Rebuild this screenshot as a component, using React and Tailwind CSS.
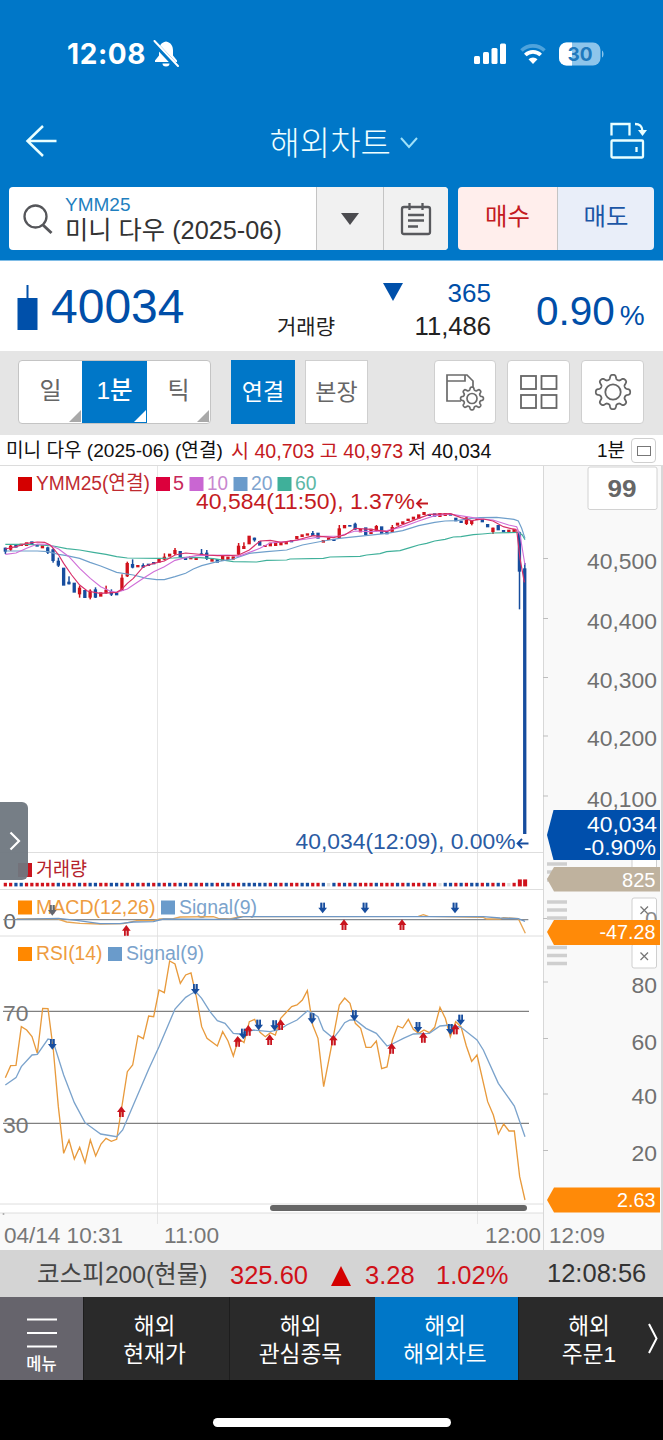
const SANS = "font-['Liberation_Sans','Noto_Sans_CJK_KR',sans-serif]";

// One candle per minute: [color, bodyTop, bodyBottom, wickTop, wickBottom], three units per pixel
const CANDLES = [
  ["b", 338, 350, 338, 357], ["r", 332, 344, 328, 348], ["b", 330, 338], ["r", 326, 333],
  ["r", 322, 333], ["b", 319, 330], ["b", 329, 335], ["r", 331, 340],
  ["b", 337, 353, 335, 357], ["b", 343, 378, 340, 383], ["b", 377, 392, 368, 396], ["b", 398, 452],
  ["b", 440, 448, 424, 448], ["b", 443, 473], ["r", 458, 478, 452, 488], ["b", 465, 489],
  ["r", 467, 488, 463, 493], ["b", 463, 488, 457, 489], ["r", 472, 485], ["r", 464, 475, 452, 476],
  ["b", 468, 479, 463, 483], ["b", 472, 481], ["r", 428, 468, 418, 468], ["r", 384, 424, 380, 426],
  ["b", 387, 398, 373, 400], ["r", 390, 397], ["b", 390, 398, 385, 398], ["b", 386, 393],
  ["b", 381, 388], ["r", 371, 383], ["r", 365, 374, 355, 376], ["r", 356, 365],
  ["r", 345, 357, 339, 360], ["b", 348, 366], ["b", 366, 375], ["r", 363, 373],
  ["r", 367, 375], ["b", 355, 363, 342, 363], ["b", 353, 372, 345, 375], ["r", 372, 380],
  ["b", 372, 383], ["r", 362, 378], ["r", 365, 375], ["r", 364, 374],
  ["r", 332, 359, 324, 360], ["r", 333, 342, 322, 342], ["r", 302, 328], ["b", 308, 316, 308, 320],
  ["b", 318, 332], ["r", 330, 336], ["r", 323, 334], ["r", 322, 333],
  ["r", 323, 331], ["r", 320, 328], ["b", 315, 322], ["r", 303, 313],
  ["r", 298, 306], ["r", 295, 302], ["b", 294, 303, 288, 303], ["b", 293, 311],
  ["r", 315, 323], ["r", 308, 315], ["b", 312, 318], ["r", 280, 309, 270, 312],
  ["r", 270, 280], ["b", 270, 275], ["b", 266, 284, 263, 284], ["r", 282, 292],
  ["b", 277, 300], ["r", 281, 297], ["r", 273, 287, 270, 290], ["b", 274, 297],
  ["b", 290, 298], ["r", 276, 291, 270, 293], ["r", 263, 272], ["r", 259, 267],
  ["r", 251, 258], ["r", 245, 254], ["r", 238, 251], ["r", 231, 240],
  ["b", 237, 243], ["b", 235, 245], ["r", 234, 246], ["r", 234, 243],
  ["b", 236, 242], ["b", 248, 259], ["b", 257, 264], ["r", 247, 267, 244, 270],
  ["r", 255, 267, 255, 271], ["r", 250, 255], ["b", 252, 262], ["b", 267, 277],
  ["r", 278, 291, 278, 297], ["b", 270, 286], ["b", 285, 292], ["r", 284, 292],
  ["r", 281, 293], ["b", 292, 410, 290, 523], ["b", 400, 1197, 384, 1197],
];

const VOLUME =
  "rrbbrrrrrrbrrrbrbbrrbbrbrbrbrbrbrbbrbrbbrbbrrbbbbb" +
  "rbrbrrbbrrb-brbrbrrrbrrrbrbrrbrr-bbrbrbbrbrbr-rRR";

const MA = [
  {
    color: "#3fb09a",
    points: "16,328 80,328 120,330 160,333 200,341 239,345 280,352 318,358 350,365 382,369 477,370 520,369 560,367 600,368 640,371 700,380 770,381 800,376 860,375 870,372 970,370 990,366 1080,364 1100,360 1140,356 1160,350 1200,347 1230,338 1256,330 1280,325 1304,318 1335,313 1360,306 1383,305 1420,299 1447,297 1480,294 1555,292 1567,300 1575,314",
  },
  {
    color: "#6f9fcb",
    points: "16,348 112,348 144,350 176,358 200,362 239,370 270,382 302,393 350,412 400,420 440,430 470,434 493,434 525,425 557,415 580,402 605,392 652,380 700,372 748,355 800,350 860,345 907,330 970,318 1018,310 1097,302 1161,295 1208,287 1256,272 1304,262 1335,258 1370,257 1415,250 1440,248 1490,247 1542,253 1555,258 1565,280 1575,310",
  },
  {
    color: "#d070d8",
    points: "16,358 48,354 80,340 112,327 144,328 176,342 207,365 239,400 271,430 302,455 330,468 350,472 382,462 430,430 461,410 493,395 525,376 557,368 589,362 684,360 716,364 748,352 780,340 810,324 860,320 920,312 970,304 1018,303 1066,288 1113,290 1161,287 1210,275 1256,258 1304,242 1351,237 1399,245 1447,252 1479,255 1526,270 1550,275 1560,300 1575,390",
  },
  {
    color: "#d8306a",
    points: "16,342 48,335 80,325 112,321 134,322 150,330 160,340 176,360 191,385 215,420 239,450 262,468 300,475 350,472 366,462 382,445 400,430 430,395 461,385 493,378 525,360 557,354 589,357 621,360 652,362 684,362 716,360 748,345 780,318 811,316 843,322 891,315 940,302 1000,308 1034,300 1066,280 1113,283 1161,290 1210,268 1256,250 1288,238 1351,236 1383,248 1415,257 1450,252 1479,258 1510,275 1550,285 1560,370 1573,442",
  },
];

const RSI =
  "16,413 32,377 48,376 64,260 80,270 96,290 112,340 128,205 144,206 160,330 175,500 191,640 207,600 223,657 239,622 255,668 271,600 287,648 303,612 318,595 334,604 350,598 364,510 382,395 398,375 414,287 430,296 446,228 461,230 477,150 493,158 509,63 525,72 541,130 557,105 573,99 589,170 605,260 621,295 652,318 668,275 684,303 700,348 716,295 732,308 748,245 764,238 780,277 796,290 811,278 826,285 842,235 875,200 891,195 907,180 922,152 938,255 954,295 971,440 1000,290 1018,195 1034,174 1050,190 1066,250 1082,265 1098,322 1113,322 1129,303 1145,386 1161,381 1177,300 1193,258 1208,264 1225,238 1240,268 1256,280 1272,270 1288,278 1304,262 1320,202 1336,235 1351,290 1367,245 1383,260 1399,318 1415,364 1431,345 1463,485 1480,525 1495,582 1511,552 1527,573 1543,573 1559,710 1575,780";
const RSI_SIGNAL =
  "16,435 48,413 64,380 96,345 112,343 144,297 158,300 191,405 223,488 255,548 302,582 350,590 368,570 400,495 446,388 477,320 525,207 557,172 573,162 587,155 605,175 630,215 652,242 675,250 700,280 720,282 760,270 810,275 840,268 860,255 891,240 922,213 938,220 954,230 970,270 1000,295 1018,272 1034,248 1050,240 1066,240 1098,265 1129,280 1161,318 1177,312 1210,295 1240,282 1288,280 1320,258 1351,255 1383,262 1431,300 1450,330 1495,430 1543,498 1575,590";

const RSI_ARROWS = [
  ["down", 157, 313], ["down", 586, 148], ["down", 730, 282], ["down", 776, 255], ["down", 824, 257],
  ["down", 936, 236], ["down", 1063, 227], ["down", 1254, 262], ["down", 1351, 268], ["down", 1382, 240],
  ["up", 364, 515], ["up", 713, 304], ["up", 745, 271], ["up", 809, 299], ["up", 842, 254],
  ["up", 1000, 300], ["up", 1175, 325], ["up", 1270, 292], ["up", 1366, 267],
];

const MACD_ARROWS = [
  ["down", 968, 354], ["down", 1095, 354], ["down", 1365, 354],
  ["up", 379, 421], ["up", 1032, 404], ["up", 1206, 404],
];

const TABS = [
  { top: "해외", bottom: "현재가", width: "w-[146px]" },
  { top: "해외", bottom: "관심종목", width: "w-[146px]" },
  { top: "해외", bottom: "해외차트", width: "w-[143px]", active: true },
  { top: "해외", bottom: "주문1", width: "w-[145px]" },
];

const toneOf = (c) => (c.toLowerCase() === "r" ? "#d0121c" : "#174d9e");
const candleX = (i) => 16 + i * 15.9;

function gearPath(cx, cy, r, depth) {
  const pts = [];
  for (let i = 0; i < 160; i++) {
    const t = (i / 160) * Math.PI * 2;
    const rad = r + depth * Math.tanh(1.8 * Math.cos(8 * t));
    pts.push(`${(cx + rad * Math.sin(t)).toFixed(2)},${(cy - rad * Math.cos(t)).toFixed(2)}`);
  }
  return `M${pts.join("L")}Z`;
}

function Arrow({ dir, x, y, color }) {
  const fill = color || (dir === "up" ? "#c8141e" : "#174d9e");
  return (
    <g transform={`translate(${x},${y}) ${dir === "up" ? "scale(1,-1)" : ""}`} fill={fill}>
      <path d="M-13,-1H13L0,16Z" />
      <path d="M-7,-16h14v20h-14z" opacity="0.45" />
      <path d="M-7,-16h5v20h-5zM2,-16h5v20h-5z" />
    </g>
  );
}

function Label({ x, y, w, size = 20, fill, anchor, children }) {
  return (
    <text
      x={x}
      y={y}
      fontSize={size}
      fill={fill}
      textAnchor={anchor}
      textLength={w}
      lengthAdjust="spacingAndGlyphs"
    >
      {children}
    </text>
  );
}

function StatusBar() {
  return (
    <div className="flex h-[108px] items-center justify-between pl-[67px] pr-[59px] text-white">
      <div className="flex items-center gap-[5px]">
        <span className="w-[81px] whitespace-nowrap font-['Inter',sans-serif] text-[28px] font-bold leading-none tracking-[0.6px]">12:08</span>
        <svg width="26" height="28" viewBox="0 0 26 28">
          <path d="M13 1.5c-5 1-7 4.500-7 9v5L2 20.500v1.500h22v-1.500l-4-5v-5c0-4.500-2-8-7-9z" fill="#fff" />
          <path d="M9.500 23.500h7a3.500 3 0 0 1-7 0z" fill="#fff" />
          <path d="M0 1.500L23 26" stroke="#0077c8" strokeWidth="5" />
          <path d="M1.500 1L25 26" stroke="#fff" strokeWidth="2" strokeLinecap="round" />
        </svg>
      </div>
      <div className="flex items-center">
        <svg width="34" height="22" viewBox="0 0 34 22" fill="#fff">
          <rect x="1" y="13" width="6" height="8" rx="1.500" />
          <rect x="10" y="9" width="6" height="12" rx="1.500" />
          <rect x="18.500" y="5" width="6" height="16" rx="1.500" />
          <rect x="27" y="0.500" width="6" height="20.500" rx="1.500" />
        </svg>
        <svg className="ml-[13px]" width="26" height="22" viewBox="0 0 26 22" fill="none">
          <path d="M1.500 7.500a16.500 16.500 0 0 1 23 0" stroke="#4ea3dc" strokeWidth="3.600" />
          <path d="M5.300 12a11 11 0 0 1 15.400 0" stroke="#fff" strokeWidth="3.700" />
          <path d="M13 21l-4.500-4.700a6.400 6.400 0 0 1 9 0z" fill="#fff" />
        </svg>
        <svg className="ml-[13px]" width="45" height="24" viewBox="0 0 45 24">
          <defs>
            <clipPath id="cell">
              <rect x="0" y="0.500" width="41.500" height="23" rx="7.500" />
            </clipPath>
          </defs>
          <g clipPath="url(#cell)">
            <rect width="42" height="24" fill="#8dc5eb" />
            <rect width="13" height="24" fill="#fff" />
          </g>
          <path d="M43 8.500c2 1 2 6 0 7z" fill="#8dc5eb" />
          <text x="21" y="19" textAnchor="middle" fontSize="19" fontWeight="700" fontFamily="Inter, sans-serif" fill="#1f79bd">30</text>
        </svg>
      </div>
    </div>
  );
}

function TitleBar() {
  return (
    <div className="flex h-[79px] items-center justify-between pb-[13px] pl-[25px] pr-[15px]">
      <svg width="33" height="40" viewBox="0 0 33 40" fill="none" stroke="#e9ffff" strokeWidth="2.500">
        <path d="M18 5L2.500 20L18 35M2.500 20H31.500" />
      </svg>
      <div className="flex items-center pl-[22px] pt-[4px] text-[#f0ffff]">
        <span className="w-[129px] whitespace-nowrap text-[33px] font-light leading-none">해외차트</span>
        <svg width="20" height="14" viewBox="0 0 20 14" fill="none" stroke="#9fe0f8" strokeWidth="2">
          <path d="M2 2L10 11L18 2" />
        </svg>
      </div>
      <svg width="40" height="40" viewBox="0 0 40 40" fill="none" stroke="#e9ffff" strokeWidth="2.300">
        <path d="M3.500 14.500V3H21.500v11.500" />
        <rect x="3.500" y="19.500" width="31.500" height="17" rx="1" />
        <path d="M28.500 26v5M27 3c5 0 7 2 7.500 7" />
        <path d="M30 9h9l-4.500 6z" fill="#e9ffff" stroke="none" />
      </svg>
    </div>
  );
}

function SearchRow() {
  return (
    <div className="flex h-[63px] gap-[10px] pl-[9px] pr-[9px]">
      <div className="flex w-[439px] overflow-hidden rounded-sm bg-white">
        <div className="flex w-[307px] items-center">
          <svg className="ml-[14px]" width="30" height="32" viewBox="0 0 30 32" fill="none" stroke="#55565a" strokeWidth="2.300">
            <circle cx="12.500" cy="13.500" r="11" />
            <path d="M20 22l8.500 8" strokeWidth="3" />
          </svg>
          <div className="ml-[12px] whitespace-nowrap">
            <div className="text-[19px] leading-[22px] text-[#1f7fbf]">YMM25</div>
            <div className="text-[25.300px] leading-[28px] text-[#333]">미니 다우 (2025-06)</div>
          </div>
        </div>
        <div className="flex w-[67px] items-center justify-center border-l border-[#c4c4c4] bg-[#f1f1f1]">
          <svg width="18" height="12" viewBox="0 0 18 12">
            <path d="M0 0h18L9 12z" fill="#4b4b4f" />
          </svg>
        </div>
        <div className="flex flex-1 items-center justify-center border-l border-[#c4c4c4] bg-[#f1f1f1]">
          <svg width="32" height="34" viewBox="0 0 32 34" fill="none" stroke="#58595d" strokeWidth="2.300">
            <rect x="2" y="5" width="28" height="27" rx="2" />
            <path d="M9.500 1v7M22.500 1v7M8 13h16M8 18.500h16M8 24.500h10" />
          </svg>
        </div>
      </div>
      <div className="flex flex-1 overflow-hidden rounded-sm text-[24.400px] leading-none">
        <button className="w-[99px] bg-[#ffeeec] pb-[2px] text-[#c41a22]">매수</button>
        <button className="flex-1 border-l border-[#c4c4c4] bg-[#e9eef9] pb-[2px] text-[#1c56a6]">매도</button>
      </div>
    </div>
  );
}

function Quote() {
  return (
    <div className="flex h-[91px] border-t border-[#7fbce6] bg-white leading-none text-[#004ea8]">
      <svg className="ml-[17px] mt-[24px]" width="21" height="45" viewBox="0 0 21 45">
        <path d="M0.500 13h20v32h-20zM9.500 0h2v14h-2z" fill="#0050aa" />
      </svg>
      <div className="ml-[13px] mt-[22px] w-[213px] text-[48px]">40034</div>
      <div className="mt-[55px] w-[119px] whitespace-nowrap pl-[13px] text-[21px] text-[#222]">거래량</div>
      <div className="relative mt-[19px] w-[108px] text-right text-[26px]">
        <svg className="absolute left-0 top-[3px]" width="20" height="18" viewBox="0 0 20 18">
          <path d="M0 0h20L10 18z" fill="#0050aa" />
        </svg>
        <div>365</div>
        <div className="mt-[8px] text-[25.600px] text-[#222]">11,486</div>
      </div>
      <div className="ml-[45px] mt-[30px] flex items-baseline text-[40.500px]">
        0.90<span className="ml-[5px] text-[28px]">%</span>
      </div>
    </div>
  );
}

function Corner({ fill }) {
  return (
    <svg className="absolute bottom-[1px] right-[1px]" width="12" height="12" viewBox="0 0 12 12">
      <path d="M12 0v12H0z" fill={fill} />
    </svg>
  );
}

function Toolbar() {
  const box = "flex h-[64px] items-center justify-center border border-[#cfcfcf] bg-white";
  return (
    <div className="flex h-[84px] items-start bg-[#e5e5e5] pl-[18px] pt-[9px] text-[23px] leading-none text-[#666]">
      <div className="flex h-[64px] rounded-sm border border-[#c4c4c4] bg-white">
        <div className="relative flex w-[63px] items-center justify-center pb-[2px] text-[24px]">일<Corner fill="#a9a9a9" /></div>
        <div className="relative flex w-[65px] items-center justify-center bg-[#0077c8] pb-[2px] text-[24.500px] font-medium text-white">1분<Corner fill="#fff" /></div>
        <div className="relative flex w-[63px] items-center justify-center pb-[2px] text-[24px]">틱<Corner fill="#a9a9a9" /></div>
      </div>
      <div className="ml-[20px] flex h-[64px] w-[64px] items-center justify-center bg-[#0077c8] text-white">연결</div>
      <div className={`${box} ml-[10px] w-[63px]`}>본장</div>
      <div className={`${box} ml-[66px] w-[62px] rounded-sm`}>
        <svg width="40" height="38" viewBox="0 0 40 38" fill="none" stroke="#6b6b6b" strokeWidth="1.700">
          <path d="M16 28H2V2h20l6 6v6" />
          <path d="M2 8h18V2" />
          <path d={gearPath(27, 25.500, 10, 1.500)} fill="#fff" />
          <circle cx="27" cy="25.500" r="5" />
        </svg>
      </div>
      <div className={`${box} ml-[11px] w-[63px] rounded-sm`}>
        <svg width="40" height="36" viewBox="0 0 40 36" fill="none" stroke="#666" strokeWidth="1.800">
          <rect x="2" y="2" width="15" height="13" />
          <rect x="22.500" y="2" width="15" height="13" />
          <rect x="2" y="21" width="15" height="13" />
          <rect x="22.500" y="21" width="15" height="13" />
        </svg>
      </div>
      <div className={`${box} ml-[11px] w-[63px] rounded-sm`}>
        <svg width="38" height="38" viewBox="0 0 38 38" fill="none" stroke="#666" strokeWidth="1.800" strokeLinejoin="round">
          <path d={gearPath(19, 19, 15, 2.300)} />
          <circle cx="19" cy="19" r="7.700" />
        </svg>
      </div>
    </div>
  );
}

function InfoRow() {
  return (
    <div className="flex h-[31px] shrink-0 items-center whitespace-nowrap border-b border-[#dcdcdc] bg-white pl-[6px] pr-[7px] pt-[3px] text-[19.600px] text-[#111]">
      <span className="w-[225px] text-[19.100px]">미니 다우 (2025-06) (연결)</span>
      <span className="w-[177px] text-[#c41a22]">시 40,703 고 40,973</span>
      <span>저 40,034</span>
      <span className="ml-auto text-[19px]">1분</span>
      <div className="mb-[2px] ml-[6px] flex h-[25px] w-[25px] items-center justify-center rounded-sm border border-[#cfcfcf]">
        <div className="h-[10px] w-[14px] border border-[#777]" />
      </div>
    </div>
  );
}

function Plot() {
  return (
    <svg width="543" height="784" viewBox="0 466 543 784" className="block">
      <rect x="0" y="466" width="543" height="748" fill="#fff" />
      <rect x="0" y="1213" width="543" height="37" fill="#f9f9f9" />
      <path d="M157.500 466V1224M477.500 466V1224" stroke="#e6e6e6" />
      <path d="M0 852.500H543M0 889.500H543M0 936H543M0 1204H543M0 1213H543" stroke="#dedede" />

      {/* legends */}
      <rect x="18" y="477" width="14" height="14" fill="#d40000" />
      <Label x={36} y={490} w={114} fill="#bf2a30">YMM25(연결)</Label>
      <rect x="156" y="477" width="14" height="14" fill="#dc003c" />
      <Label x={173} y={490} w={11} fill="#c8285a">5</Label>
      <rect x="189.500" y="477" width="14" height="14" fill="#c966d2" />
      <Label x={207} y={490} w={21} fill="#c987cf">10</Label>
      <rect x="233.500" y="477" width="14" height="14" fill="#6a9bcb" />
      <Label x={251} y={490} w={21.5} fill="#7fa5cf">20</Label>
      <rect x="277.500" y="477" width="14" height="14" fill="#3fb09a" />
      <Label x={295} y={490} w={21.5} fill="#5cb8a6">60</Label>

      {/* price */}
      <g transform="translate(0,435) scale(0.333333)">
        {CANDLES.map(([c, top, bottom, hi, lo], i) => (
          <g key={i} fill={toneOf(c)}>
            <rect x={candleX(i) - 5} y={top} width="10" height={bottom - top} />
            {hi !== undefined && <rect x={candleX(i) - 2} y={hi} width="4.500" height={lo - hi} />}
          </g>
        ))}
        {MA.map((m) => (
          <polyline key={m.color} points={m.points} fill="none" stroke={m.color} strokeWidth="3.500" />
        ))}
      </g>
      <Label x={196} y={509} w={219} size={22.5} fill="#c41a22">40,584(11:50), 1.37%</Label>
      <path d="M428 503.500H417.500M421.500 499L417 503.500L421.500 508" stroke="#c41a22" strokeWidth="1.800" fill="none" />
      <Label x={295.500} y={849} w={220} size={22.5} fill="#2a5ba3">40,034(12:09), 0.00%</Label>
      <path d="M528.500 843.500H518M522 839L517.500 843.500L522 848" stroke="#174d9e" strokeWidth="1.800" fill="none" />

      {/* volume */}
      <rect x="18" y="863" width="14" height="14" fill="#c8141e" />
      <Label x={36} y={876} w={51} size={19.5} fill="#b5222b">거래량</Label>
      {VOLUME.split("").map((c, i) => {
        const x = candleX(i) / 3;
        if (c === "-") return <rect key={i} x={x - 1.6} y={883} width={3.2} height={3.4} fill="#dcdcdc" />;
        const h = c === "R" ? 7 : 3.6;
        return <rect key={i} x={x - 1.6} y={886.400 - h} width={c === "R" ? 4 : 3.2} height={h} fill={toneOf(c)} />;
      })}

      {/* macd */}
      <rect x="18" y="900.500" width="14" height="14" fill="#ff8800" />
      <Label x={36} y={914} w={119.500} fill="#ee9c40">MACD(12,26)</Label>
      <rect x="161" y="900.500" width="14" height="14" fill="#6a9bcb" />
      <Label x={179} y={914} w={78} fill="#7ba3cc">Signal(9)</Label>
      <Label x={3.500} y={929} w={12.500} size={22} fill="#666">0</Label>
      <g transform="translate(0,790) scale(0.333333)" fill="none" strokeWidth="4">
        <path d="M10,389H1585" stroke="#858a90" />
        <polyline stroke="#e8a552" points="50,387 170,386 200,396 240,400 300,402 370,401 410,392 460,392 480,387 520,386 540,381 640,380 655,385 690,387 720,380 1255,379 1270,374 1285,379 1450,382 1460,387 1500,387 1510,383 1555,386 1576,430" />
        <polyline stroke="#6f97c4" points="50,388 175,385 230,391 300,401 360,401 400,396 460,395 490,387 640,388 700,387 730,380 1450,380 1500,384 1555,386 1575,394" />
        <Arrow dir="down" x={157} y={361} color="#62666e" />
        {MACD_ARROWS.map(([dir, x, y]) => (
          <Arrow key={x} dir={dir} x={x} y={y} />
        ))}
      </g>

      {/* rsi */}
      <rect x="18" y="947" width="14" height="14" fill="#ff8800" />
      <Label x={36} y={960} w={66.500} fill="#ee9c40">RSI(14)</Label>
      <rect x="108" y="947" width="14" height="14" fill="#6a9bcb" />
      <Label x={126} y={960} w={78} fill="#7ba3cc">Signal(9)</Label>
      <path d="M3 1011.400H529M3 1123.400H529" stroke="#808080" strokeWidth="1.400" />
      <Label x={3} y={1021} w={25.500} size={22.5} fill="#777">70</Label>
      <Label x={3} y={1133} w={25.500} size={22.5} fill="#777">30</Label>
      <g transform="translate(0,940) scale(0.333333)">
        <polyline points={RSI} fill="none" stroke="#e89a3c" strokeWidth="4" />
        <polyline points={RSI_SIGNAL} fill="none" stroke="#7ba3cc" strokeWidth="4" />
        {RSI_ARROWS.map(([dir, x, y]) => (
          <Arrow key={x} dir={dir} x={x} y={y} />
        ))}
      </g>

      {/* scroll thumb and time axis */}
      <rect x="270" y="1205" width="257" height="6" rx="3" fill="#666" />
      <circle cx="3.500" cy="1214" r="1" fill="#aaa" />
      <Label x={4} y={1243} w={119} size={22.5} fill="#777">04/14 10:31</Label>
      <Label x={164} y={1243} w={55} size={22.5} fill="#777">11:00</Label>
      <Label x={485} y={1243} w={56} size={22.5} fill="#777">12:00</Label>
    </svg>
  );
}

function Grip({ y }) {
  return <path d={`M547 ${y}h20M547 ${y + 8}h20M547 ${y + 16}h20`} stroke="#cfcfcf" strokeWidth="3.500" />;
}

function Close({ y }) {
  return (
    <g fill="none">
      <rect x="632" y={y} width="24.500" height="24" rx="2" fill="#fff" stroke="#cfcfcf" />
      <path d={`M640.500 ${y + 8.500}l7.500 7.500m0 -7.500l-7.500 7.500`} stroke="#777" strokeWidth="1.300" />
    </g>
  );
}

function Axis() {
  const prices = [["40,500", 569], ["40,400", 629], ["40,300", 687.500], ["40,200", 746], ["40,100", 806.500]];
  const levels = [["80", 993], ["60", 1050], ["40", 1104], ["20", 1161]];
  return (
    <svg width="120" height="784" viewBox="543 466 120 784" className="block">
      <rect x="543" y="466" width="120" height="784" fill="#f9f9f9" />
      <path d="M543 466V1250M662 466V1250" stroke="#d8d8d8" strokeWidth="2" />
      <path d="M543 558.500h5M543 618.500h5M543 677.500h5M543 736h5M543 796h5M543 918.500h5M543 982h5M543 1038.500h5M543 1094h5M543 1150.500h5" stroke="#bdbdbd" />
      <rect x="588" y="467" width="69" height="42.500" rx="2" fill="#fff" stroke="#d2d2d2" />
      <Label x={607.500} y={496.500} w={29} size={23} fill="#666">
        <tspan fontWeight="700">99</tspan>
      </Label>
      {prices.map(([t, y]) => (
        <Label key={t} x={587} y={y} w={70} size={22.5} fill="#707070">{t}</Label>
      ))}
      {levels.map(([t, y]) => (
        <Label key={t} x={631.500} y={y} w={25.500} size={22.5} fill="#707070">{t}</Label>
      ))}
      <Grip y={864} />
      <rect x="632" y="857" width="24.500" height="24" rx="2" fill="#fff" stroke="#cfcfcf" />
      <Grip y={902} />
      <Close y={898} />
      <Label x={645} y={927} w={12.500} size={22} fill="#8a8a8a">0</Label>
      <Grip y={947.500} />
      <Close y={944} />

      <path d="M547 835L553.500 810H660V860H553.500Z" fill="#004fac" />
      <Label x={587} y={831.500} w={70} size={22.5} fill="#fff">40,034</Label>
      <Label x={584} y={855} w={72} size={22.5} fill="#fff">-0.90%</Label>
      <path d="M547 879L554 867H660V891.500H554Z" fill="#bfb29e" />
      <Label x={622} y={886.500} w={33.500} fill="#fff">825</Label>
      <path d="M547 932L554 920H660V945H554Z" fill="#ff8a08" />
      <Label x={599.500} y={939} w={56} fill="#fff">-47.28</Label>
      <path d="M547 1200L554 1187.500H660V1212.500H554Z" fill="#ff8a08" />
      <Label x={617} y={1206.500} w={38.500} fill="#fff">2.63</Label>
      <Label x={549} y={1243} w={56} size={22.5} fill="#777">12:09</Label>
    </svg>
  );
}

function Ticker() {
  return (
    <div className="flex h-[47px] items-center whitespace-nowrap bg-[#d4d4d4] pl-[37px] text-[25.500px] leading-none text-[#d01018]">
      <span className="w-[193px] pt-[3px] text-[24.600px] text-[#444]">코스피200(현물)</span>
      <span className="w-[101px] pt-[4px]">325.60</span>
      <svg className="mt-[4px]" width="20" height="20" viewBox="0 0 20 20">
        <path d="M10 0l10 20H0z" fill="#d40000" />
      </svg>
      <span className="ml-[14px] w-[71px] pt-[4px]">3.28</span>
      <span className="w-[111px] pt-[4px]">1.02%</span>
      <span className="text-[#333]">12:08:56</span>
    </div>
  );
}

function BottomNav() {
  return (
    <nav className="relative flex h-[83px] bg-[#2a2a2a] text-[22.700px] leading-[28px] text-white">
      <div className="flex w-[83px] flex-col items-center bg-[#66646c] pt-[21px]">
        <svg width="30" height="30" viewBox="0 0 30 30" stroke="#fff" strokeWidth="1.800">
          <path d="M0 1.500H30M0 15H30M0 28.500H30" />
        </svg>
        <span className="mt-[6px] text-[16.500px] font-medium leading-[20px]">메뉴</span>
      </div>
      {TABS.map((tab) => (
        <div
          key={tab.bottom}
          className={`${tab.width} flex flex-col items-center justify-center whitespace-nowrap border-l pr-[4px] pt-[3px] ${
            tab.active ? "border-[#0077c8] bg-[#0077c8]" : "border-[#1d1d1d]"
          }`}
        >
          <span>{tab.top}</span>
          <span>{tab.bottom}</span>
        </div>
      ))}
      <svg className="absolute right-[5px] top-[26px]" width="10" height="31" viewBox="0 0 10 31" fill="none" stroke="#fff" strokeWidth="2">
        <path d="M1 1L8.500 15.500L1 30" />
      </svg>
    </nav>
  );
}

export default function App() {
  return (
    <div className={`${SANS} flex h-[1440px] w-[663px] flex-col overflow-hidden bg-black`}>
      <header className="h-[260px] shrink-0 bg-[#0077c8]">
        <StatusBar />
        <TitleBar />
        <SearchRow />
      </header>
      <Quote />
      <Toolbar />
      <InfoRow />
      <div className="relative flex h-[784px] shrink-0 overflow-hidden">
        <Plot />
        <Axis />
        <button className="absolute left-0 top-[336px] flex h-[78px] w-[28px] items-center justify-center rounded-r-md bg-[#6f7780]/95">
          <svg className="ml-[2px]" width="12" height="20" viewBox="0 0 12 20" fill="none" stroke="#fff" strokeWidth="2.200">
            <path d="M1.500 1.500L10 10L1.500 18.500" />
          </svg>
        </button>
      </div>
      <Ticker />
      <BottomNav />
      <div className="flex flex-1 items-end justify-center pb-[13px]">
        <div className="h-[9px] w-[238px] rounded-full bg-white" />
      </div>
    </div>
  );
}
